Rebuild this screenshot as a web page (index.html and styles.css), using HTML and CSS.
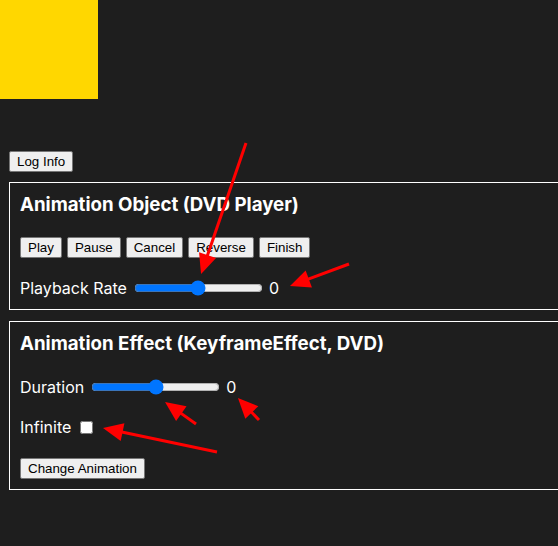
FILE: index.html
```html
<!DOCTYPE html>
<html>
<head>
<meta charset="utf-8">
<link rel="stylesheet" href="styles.css">
</head>
<body>
<div class="stage"><div class="dvd"></div></div>
<main class="controls">
  <button class="btn">Log Info</button>
  <section class="panel panel-first">
    <h2 class="panel-title">Animation Object (DVD Player)</h2>
    <div class="btn-row">
      <button class="btn">Play</button>
      <button class="btn">Pause</button>
      <button class="btn">Cancel</button>
      <button class="btn">Reverse</button>
      <button class="btn">Finish</button>
    </div>
    <div class="field field-last">
      <span class="label">Playback Rate</span>
      <input class="range" type="range" min="-2" max="2" step="0.1" value="0">
      <span class="value">0</span>
    </div>
  </section>
  <section class="panel">
    <h2 class="panel-title">Animation Effect (KeyframeEffect, DVD)</h2>
    <div class="field field-duration">
      <span class="label">Duration</span>
      <input class="range" type="range" min="0" max="10000" value="5000">
      <span class="value">0</span>
    </div>
    <div class="field field-infinite">
      <span class="label">Infinite</span>
      <input class="check" type="checkbox">
    </div>
    <div class="btn-row">
      <button class="btn">Change Animation</button>
    </div>
  </section>
</main>
<svg class="annotations" width="558" height="546" viewBox="0 0 558 546">
  <defs>
    <marker id="head" markerUnits="userSpaceOnUse" markerWidth="24" markerHeight="22" viewBox="-3 -11 24 22" refX="0" refY="0" orient="auto">
      <path d="M-2,-9 L18,0 L-2,9 z" fill="#ff0000"/>
    </marker>
  </defs>
  <g stroke="#ff0000" stroke-width="3" marker-end="url(#head)">
    <line x1="246" y1="143" x2="206.9" y2="257"/>
    <line x1="349" y1="264" x2="306.9" y2="279.7"/>
    <line x1="196" y1="424" x2="179.7" y2="412.4"/>
    <line x1="259" y1="420" x2="250.4" y2="411"/>
    <line x1="217" y1="452" x2="120.6" y2="431.7"/>
  </g>
</svg>
</body>
</html>
```
FILE: styles.css
```css
html, body {
  margin: 0;
  padding: 0;
  background: #1e1e1e;
  color: #ffffff;
  font-family: Inter, "Noto Sans", sans-serif;
  font-size: 16px;
  overflow: hidden;
  width: 558px;
  height: 546px;
  position: relative;
}

.stage {
  height: 150px;
}

.dvd {
  width: 98px;
  height: 99px;
  background: #ffd700;
}

.controls {
  padding: 0 9px;
}

.btn {
  font-family: "Liberation Sans", Arial, sans-serif;
  font-size: 13.333px;
  color: #000;
  background: #efefef;
  border: 1px solid #767676;
  border-radius: 2px;
  padding: 1px 7px;
  height: 21px;
  margin: 0;
}

.panel {
  width: 600px;
  border: 1px solid #ffffff;
  padding: 10px 10px 10px;
  margin-top: 10px;
  box-sizing: border-box;
}

.panel + .panel {
  margin-top: 11px;
}

.panel-first {
  padding-top: 10px;
}

.panel-title {
  margin: 0 0 21px;
  font-size: 18.72px;
  line-height: 23px;
  font-weight: 700;
}

.btn-row {
  display: flex;
  gap: 5px;
}

.panel-first .btn-row {
  margin-bottom: 19px;
}

.field {
  display: flex;
  align-items: center;
  height: 22px;
  margin-bottom: 19px;
}

.field-duration {
  margin-bottom: 18px;
}

.field-infinite {
  margin-bottom: 20px;
}

.field-last {
  margin-bottom: 0;
}

.label {
  margin-right: 6px;
}

.range {
  width: 129px;
  margin: 2px 6px 2px 1px;
}

.value {
  margin-left: 0;
}

.check {
  margin: 0 0 0 3px;
  width: 13px;
  height: 13px;
}

.annotations {
  position: absolute;
  left: 0;
  top: 0;
  pointer-events: none;
}
```
